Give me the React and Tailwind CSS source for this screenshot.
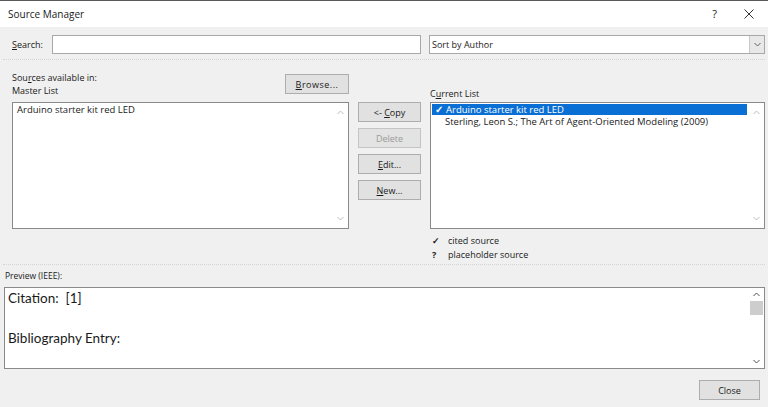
import React from "react";

const F = { fontFamily: '"Open Sans", "Noto Sans", sans-serif' };

function Btn({ children, disabled, className = "" }) {
  return (
    <div
      className={`flex items-center justify-center border text-[9px] leading-none ${
        disabled
          ? "border-[#c4c4c4] bg-[#e3e3e3] text-[#9a9a9a]"
          : "border-[#adadad] bg-[#e1e1e1] text-[#1a1a1a]"
      } ${className}`}
    >
      {children}
    </div>
  );
}

function Chev({ up, color = "#bdbdbd" }) {
  return (
    <svg width="7" height="5" viewBox="0 0 7 5">
      <path
        d={up ? "M0.5 4 L3.5 1 L6.5 4" : "M0.5 1 L3.5 4 L6.5 1"}
        fill="none"
        stroke={color}
        strokeWidth="1"
      />
    </svg>
  );
}

function ListBox({ children }) {
  return (
    <div className="flex h-[127px] border border-[#8a8a8a] bg-white">
      <div className="flex-1 pt-[1px]">{children}</div>
      <div className="flex w-[16px] flex-col items-center justify-between py-[7px]">
        <Chev up />
        <Chev />
      </div>
    </div>
  );
}

export default function App() {
  return (
    <div
      style={F}
      className="flex h-[407px] w-[768px] flex-col overflow-hidden border-t border-[#5a5a5a] bg-[#f0f0f0] text-[#1a1a1a]"
    >
      {/* title bar */}
      <div className="flex h-[26px] items-center justify-between bg-white pl-[8px] pr-[14px]">
        <span className="text-[10px]">Source Manager</span>
        <div className="flex items-center gap-[27px]">
          <span className="text-[11px]">?</span>
          <svg width="10" height="10" viewBox="0 0 10 10">
            <path d="M0.5 0.5 L9.5 9.5 M9.5 0.5 L0.5 9.5" stroke="#333" strokeWidth="1" />
          </svg>
        </div>
      </div>

      {/* search row */}
      <div className="flex items-center gap-[8px] pl-[12px] pr-[3px] pt-[8px]">
        <span className="w-[32px] text-[9px]">
          <span className="underline">S</span>earch:
        </span>
        <div className="h-[19px] w-[369px] border border-[#a8a8a8] bg-white" />
        <div className="flex h-[19px] flex-1 items-center border border-[#a8a8a8] bg-white">
          <span className="flex-1 pl-[2px] text-[9px]">Sort by Author</span>
          <div className="flex h-full w-[15px] items-center justify-center border-l border-[#c8c8c8] bg-[#e8e8e8]">
            <Chev color="#606060" />
          </div>
        </div>
      </div>

      <div className="mx-[3px] mt-[5px] border-t border-dotted border-[#d4d4d4]" />

      {/* main area */}
      <div className="flex gap-[9px] pl-[12px] pr-[3px] pt-[11px]">
        {/* left */}
        <div className="flex w-[337px] flex-col">
          <div className="flex h-[31px] items-start justify-between">
            <div className="text-[9px] leading-[13px]">
              <div>
                Sou<span className="underline">r</span>ces available in:
              </div>
              <div>Master List</div>
            </div>
            <Btn className="mt-[3px] h-[20px] w-[64px]">
              <span className="tracking-[0.5px]">
                <span className="underline">B</span>rowse...
              </span>
            </Btn>
          </div>
          <ListBox>
            <div className="pl-[4px] text-[9.5px] leading-[12px]">Arduino starter kit red LED</div>
          </ListBox>
        </div>

        {/* middle buttons */}
        <div className="flex w-[63px] flex-col gap-[6px] pt-[31px]">
          <Btn className="h-[20px]">
            &lt;-&nbsp;<span className="underline">C</span>opy
          </Btn>
          <Btn disabled className="h-[20px]">
            Delete
          </Btn>
          <Btn className="h-[20px]">
            <span className="underline">E</span>dit...
          </Btn>
          <Btn className="h-[20px]">
            <span className="underline">N</span>ew...
          </Btn>
        </div>

        {/* right */}
        <div className="flex flex-1 flex-col">
          <div className="flex h-[31px] items-end pb-[2px] text-[9px] leading-[13px]">
            <span>
              C<span className="underline">u</span>rrent List
            </span>
          </div>
          <ListBox>
            <div className="mx-[1px] flex h-[11px] items-center overflow-hidden bg-[#0a6fd4] pl-[3px] text-[9.5px] leading-[11px] text-white">
              <span className="w-[11px] font-bold">✓</span>
              <span>Arduino starter kit red LED</span>
            </div>
            <div className="flex h-[13px] items-center pl-[14px] text-[9.5px] leading-[13px]">
              Sterling, Leon S.; The Art of Agent-Oriented Modeling (2009)
            </div>
          </ListBox>
          <div className="mt-[5px] flex flex-col pl-[2px] text-[9px] leading-[14px]">
            <div className="flex">
              <span className="w-[16px] font-bold">✓</span>
              <span>cited source</span>
            </div>
            <div className="flex">
              <span className="w-[16px] font-bold">?</span>
              <span>placeholder source</span>
            </div>
          </div>
        </div>
      </div>

      <div className="mx-[3px] mt-[2px] border-t border-dotted border-[#d4d4d4]" />

      {/* preview */}
      <div className="pl-[5px] pt-[4px] text-[8.5px] leading-[13px]">Preview (IEEE):</div>
      <div className="ml-[4px] mr-[3px] mt-[5px] flex h-[82px] border border-[#8a8a8a] bg-white">
        <div
          className="flex-1 pl-[3px] pt-[1px] text-[13.5px] leading-[19px]"
          style={{ fontFamily: '"Lato", "Noto Sans", sans-serif' }}
        >
          <div>Citation:&nbsp; [1]</div>
          <div className="h-[21px]" />
          <div>Bibliography Entry:</div>
        </div>
        <div className="flex w-[15px] flex-col items-center justify-between py-[4px]">
          <div className="flex flex-col items-center">
            <Chev up color="#505050" />
            <div className="mt-[4px] h-[14px] w-[13px] bg-[#cdcdcd]" />
          </div>
          <Chev color="#505050" />
        </div>
      </div>

      {/* footer */}
      <div className="flex justify-end pr-[8px] pt-[11px]">
        <Btn className="h-[20px] w-[61px]">Close</Btn>
      </div>
    </div>
  );
}
